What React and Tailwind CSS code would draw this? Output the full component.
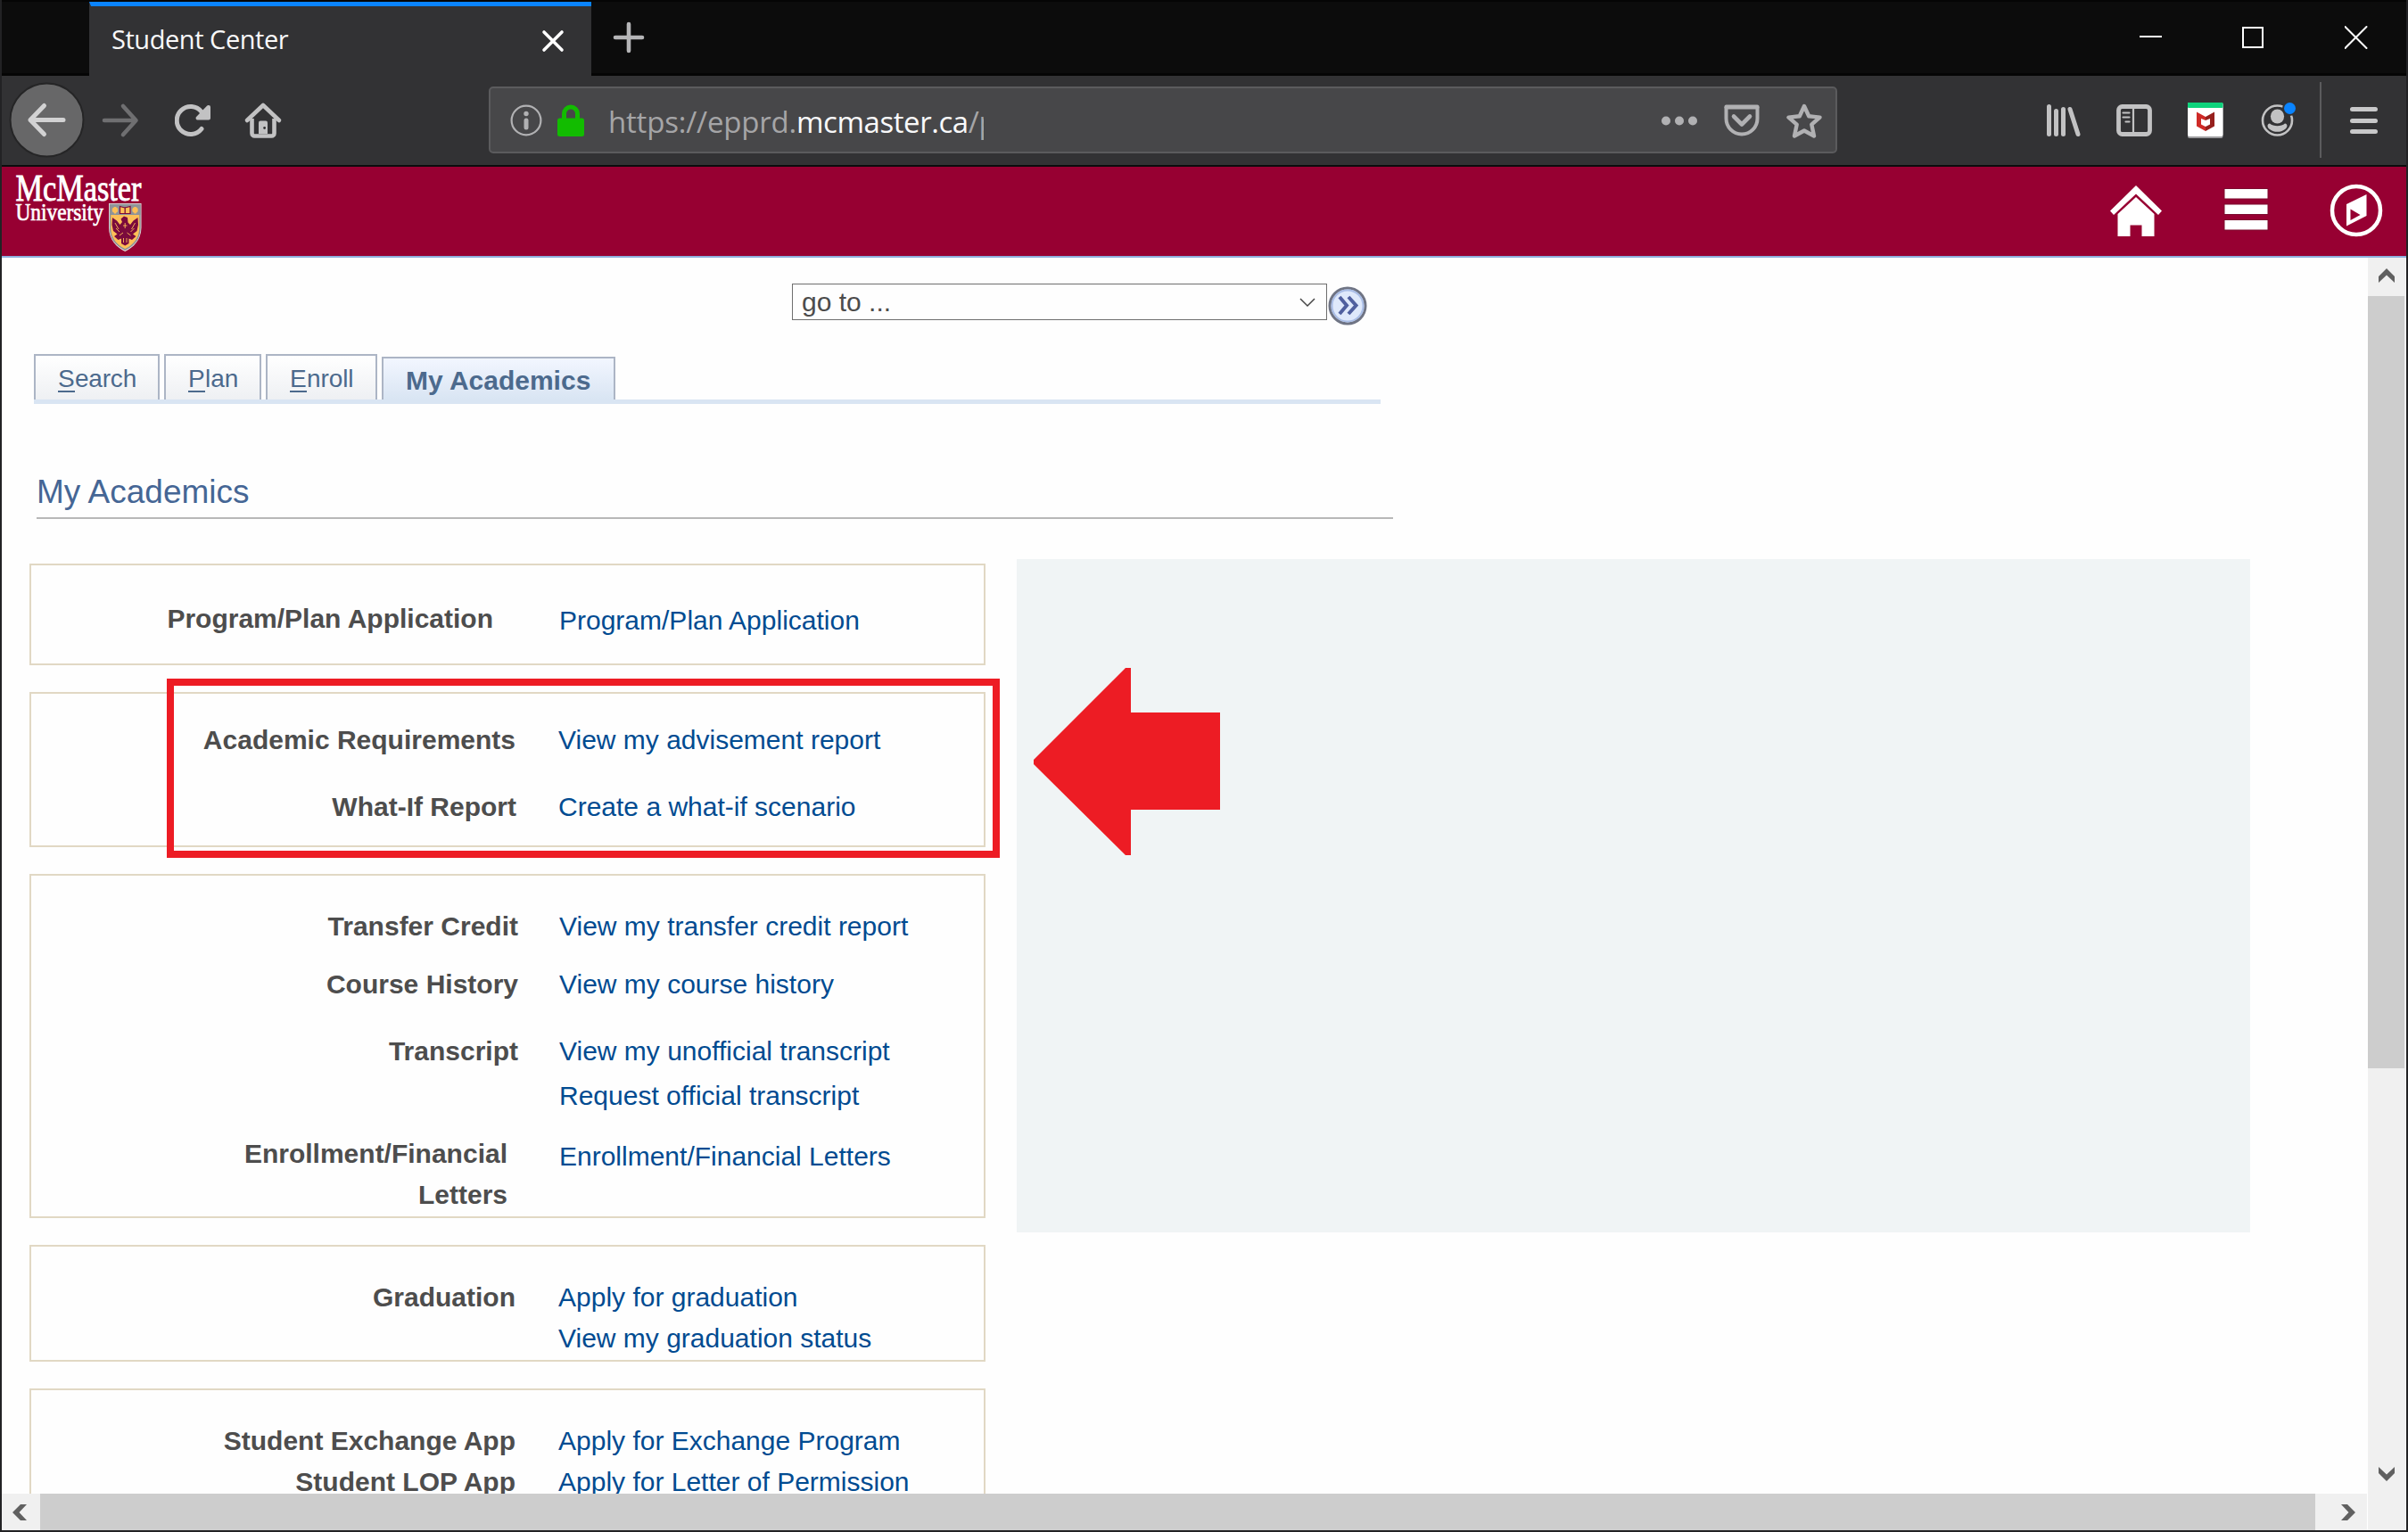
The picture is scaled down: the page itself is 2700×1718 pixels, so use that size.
import React from "react";

const groups = [
  {
    box: "h-[114px] pt-[37px]",
    rows: [{ label: ["Program/Plan Application"], links: [{ text: "Program/Plan Application", cls: "mt-[2px] ml-[1px]" }], labelCls: "pr-[27px]" }],
  },
  {
    box: "h-[174px] pt-[29px]",
    rows: [
      { label: ["Academic Requirements"], links: [{ text: "View my advisement report" }], labelCls: "pr-[2px]" },
      { label: ["What-If Report"], links: [{ text: "Create a what-if scenario" }], cls: "mt-[29px]", labelCls: "pr-px" },
    ],
  },
  {
    box: "h-[386px] pt-[34px] pl-[1px]",
    rows: [
      { label: ["Transfer Credit"], links: [{ text: "View my transfer credit report" }] },
      { label: ["Course History"], links: [{ text: "View my course history" }], cls: "mt-[19px]" },
      {
        label: ["Transcript"],
        links: [{ text: "View my unofficial transcript" }, { text: "Request official transcript", cls: "mt-[4px]" }],
        cls: "mt-[29px]",
      },
      {
        label: ["Enrollment/Financial", "Letters"],
        links: [{ text: "Enrollment/Financial Letters", cls: "mt-[3px]" }],
        cls: "mt-[19px]",
        labelCls: "pr-[12px]",
      },
    ],
  },
  {
    box: "h-[131px] pt-[34px]",
    rows: [
      {
        label: ["Graduation"],
        links: [{ text: "Apply for graduation" }, { text: "View my graduation status" }],
        labelCls: "pr-[2px]",
      },
    ],
  },
  {
    box: "h-[200px] pt-[34px]",
    rows: [
      { label: ["Student Exchange App"], links: [{ text: "Apply for Exchange Program" }], labelCls: "pr-[2px]" },
      { label: ["Student LOP App"], links: [{ text: "Apply for Letter of Permission" }], labelCls: "pr-[2px]" },
    ],
  },
];

const tabs = [
  { text: "Search", cls: "w-[141px] pl-[25px] tracking-[-0.2px]" },
  { text: "Plan", cls: "w-[109px] pl-[25px]" },
  { text: "Enroll", cls: "w-[125px] pl-[25px] tracking-[-0.1px]" },
];

function TitleBar() {
  return (
    <div className="flex h-[85px] border-t-2 border-b-[3px] border-[#050505] bg-[#0c0c0c]">
      <div className="-mb-[3px] ml-[98px] flex w-[563px] items-center justify-between border-t-[5px] border-l-2 border-t-[#0a84ff] border-l-[#323234] bg-[#323234] pr-[29px] pl-[23px]">
        <span className="-mt-[4px] text-[29px] leading-[40px] tracking-[-0.45px] text-[#f9f9fa]">Student Center</span>
        <svg className="h-[28px] w-[28px]" viewBox="0 0 28 28" fill="none" stroke="#fff" strokeWidth="3.6" strokeLinecap="round">
          <path d="M4 4 L24 24 M24 4 L4 24" />
        </svg>
      </div>
      <svg className="mt-[20px] ml-[22px] h-[40px] w-[40px]" viewBox="0 0 40 40" stroke="#b5b5b7" strokeWidth="4.6" strokeLinecap="round">
        <path d="M20 5 V35 M5 20 H35" />
      </svg>
      <div className="mt-[24px] ml-auto flex gap-[84px] pr-[37px]">
        <svg className="h-[32px] w-[32px]" viewBox="0 0 32 32">
          <rect x="2" y="14" width="25" height="2" fill="#fff" />
        </svg>
        <svg className="h-[32px] w-[32px]" viewBox="0 0 32 32">
          <rect x="2" y="5" width="22" height="22" fill="none" stroke="#fff" strokeWidth="2" />
        </svg>
        <svg className="h-[32px] w-[32px]" viewBox="0 0 32 32" stroke="#fff" strokeWidth="2" strokeLinecap="round">
          <path d="M0.500 4 L24.500 28 M24.500 4 L0.500 28" />
        </svg>
      </div>
    </div>
  );
}

function NavBar() {
  return (
    <div className="flex h-[102px] border-b-2 border-[#0c0c0d] bg-[#323234]">
      <svg className="mt-[7px] ml-[8px] h-[86px] w-[86px]" viewBox="0 0 86 86">
        <circle cx="42.5" cy="42.5" r="41" fill="#676768" stroke="#252526" strokeWidth="2" />
        <path d="M61 42.5 H24 M39.5 26.5 L24 42.5 L39.5 58.5" fill="none" stroke="#d2d2d3" strokeWidth="5" strokeLinecap="round" strokeLinejoin="round" />
      </svg>
      <svg className="mt-[30px] ml-[17px] h-[40px] w-[44px]" viewBox="0 0 44 40">
        <path d="M4 20 H39 M25 4 L39.5 20 L25 36" fill="none" stroke="#6f6f71" strokeWidth="4.6" strokeLinecap="round" strokeLinejoin="round" />
      </svg>
      <svg className="mt-[30px] ml-[39px] h-[40px] w-[42px]" viewBox="0 0 42 40">
        <path d="M30 29.5 A15.5 15.5 0 1 1 30 10.5 L34 15" fill="none" stroke="#c2c2c3" strokeWidth="5" strokeLinecap="round" />
        <path d="M38 3 a2 2 0 0 1 2 2 V17.5 a2 2 0 0 1 -2 2 H25.5 a2 2 0 0 1 -1.4 -3.4 L36 3.8 a2 2 0 0 1 2 -0.8z" fill="#c2c2c3" />
      </svg>
      <svg className="mt-[29px] ml-[35px] h-[42px] w-[44px]" viewBox="0 0 44 42">
        <path d="M4 21 L22 4 L40 21" fill="none" stroke="#c2c2c3" strokeWidth="4.6" strokeLinecap="round" strokeLinejoin="round" />
        <path d="M9.5 19 V35.5 a3 3 0 0 0 3 3 H31.5 a3 3 0 0 0 3 -3 V19" fill="none" stroke="#c2c2c3" strokeWidth="4.6" />
        <path d="M17 36 V23.5 a2 2 0 0 1 2 -2 h6 a2 2 0 0 1 2 2 V36z" fill="#c2c2c3" />
        <circle cx="23.6" cy="29.5" r="1.4" fill="#323234" />
      </svg>
      <div className="mt-[12px] ml-[231px] flex h-[75px] w-[1512px] rounded-[5px] border-2 border-[#5b5b5d] bg-[#474749]">
        <svg className="mt-[18px] ml-[20px] h-[40px] w-[40px]" viewBox="0 0 40 40">
          <circle cx="20" cy="18" r="16.4" fill="none" stroke="#b1b1b3" strokeWidth="2.2" />
          <circle cx="20" cy="10.5" r="2.7" fill="#b1b1b3" />
          <path d="M20 18 V26" stroke="#b1b1b3" strokeWidth="5" strokeLinecap="round" />
        </svg>
        <svg className="mt-[18px] ml-[13px] h-[40px] w-[34px]" viewBox="0 0 34 40">
          <path d="M9.500 17 V10.500 a7.500 7.500 0 0 1 15 0 V17" fill="none" stroke="#12bc00" strokeWidth="5" />
          <rect x="2" y="15.500" width="30" height="20.500" rx="2.500" fill="#12bc00" />
        </svg>
        <div className="mt-[11px] ml-[25px] w-[421px] overflow-hidden text-[33px] leading-[54px] tracking-[-0.2px] whitespace-nowrap text-[#a5a5a7]">
          https://epprd.<span className="tracking-[-0.45px] text-[#f9f9fa]">mcmaster.ca</span>/p
        </div>
        <svg className="mt-[16px] ml-auto h-[42px] w-[44px]" viewBox="0 0 44 42" fill="#b1b1b3">
          <circle cx="7" cy="20.500" r="5" />
          <circle cx="22" cy="20.500" r="5" />
          <circle cx="37" cy="20.500" r="5" />
        </svg>
        <svg className="mt-[16px] ml-[26px] h-[42px] w-[44px]" viewBox="0 0 44 42" fill="none" stroke="#b1b1b3" strokeLinejoin="round" strokeLinecap="round">
          <path d="M4.500 4.500 H39.500 V18 A17.500 17.500 0 0 1 4.500 18z" strokeWidth="4" />
          <path d="M4.500 5.500 H39.500" strokeWidth="4" />
          <path d="M13 15.500 L22 24.500 L31 15.500" strokeWidth="4.600" />
        </svg>
        <svg className="mt-[16px] mr-[13px] ml-[26px] h-[42px] w-[44px]" viewBox="0 0 44 42">
          <path d="M22 4 L27.200 15.200 L39.500 16.600 L30.300 24.600 L33 37.500 L22 31.500 L11 37.500 L13.700 24.600 L4.500 16.600 L16.800 15.200z" fill="none" stroke="#b1b1b3" strokeWidth="4.400" strokeLinejoin="round" />
        </svg>
      </div>
      <div className="mt-[28px] ml-[233px] flex gap-[36px]">
        <svg className="h-[44px] w-[44px]" viewBox="0 0 44 44" stroke="#c2c2c3" strokeWidth="5" strokeLinecap="round">
          <path d="M4.500 6.500 V37.500 M12.500 11.500 V37.500 M20.500 9.500 V37.500 M28 9.500 L37 37.500" />
        </svg>
        <svg className="-ml-[2px] h-[44px] w-[44px]" viewBox="0 0 44 44">
          <rect x="4.500" y="6.500" width="35" height="31" rx="4" fill="none" stroke="#c2c2c3" strokeWidth="4.800" />
          <path d="M21 6 V38" stroke="#c2c2c3" strokeWidth="2.200" />
          <path d="M9.500 13.500 H16.500 M9.500 18.500 H16.500 M12.500 23.500 H16.500" stroke="#c2c2c3" strokeWidth="2.200" strokeLinecap="round" />
        </svg>
        <svg className="h-[44px] w-[44px]" viewBox="0 0 44 44">
          <rect x="2" y="2" width="39.500" height="40" rx="2" fill="#9d9da0" />
          <rect x="2" y="2" width="39.500" height="38" rx="2" fill="#fff" />
          <rect x="2" y="2" width="39.500" height="6" rx="1" fill="#0fd37c" />
          <path d="M12 12.500 L22 18 V22 L17 20 V26.500 L22 29 V34 L12 28.500z" fill="#cf2a27" />
          <path d="M32 12.500 L22 18 V22 L27 20 V26.500 L22 29 V34 L32 28.500z" fill="#96201d" />
        </svg>
        <svg className="ml-[2px] h-[44px] w-[44px]" viewBox="0 0 44 44">
          <circle cx="20.500" cy="22" r="16.500" fill="none" stroke="#c2c2c3" strokeWidth="2.600" />
          <ellipse cx="20.500" cy="17.500" rx="7.600" ry="8" fill="#c2c2c3" />
          <path d="M12 25.500 C16 29 25 29 29 25.500 C32.500 26 32 30 29 32 C24 35.800 17 35.800 12 32 C9 30 8.500 26 12 25.500z" fill="#c2c2c3" />
          <circle cx="34.500" cy="8.500" r="8.500" fill="#323234" />
          <circle cx="34.500" cy="8.500" r="6.500" fill="#0a84ff" />
        </svg>
      </div>
      <div className="mt-[7px] ml-[24px] h-[85px] w-[2px] bg-[#5b5b5d]" />
      <div className="mt-[35px] ml-[32px] flex w-[31px] flex-col gap-[7.500px]">
        <div className="h-[5px] rounded-full bg-[#c8c8c9]" />
        <div className="h-[5px] rounded-full bg-[#c8c8c9]" />
        <div className="h-[5px] rounded-full bg-[#c8c8c9]" />
      </div>
    </div>
  );
}

function Logo() {
  return (
    <svg className="ml-[14px] h-[100px] w-[150px] overflow-visible" viewBox="16 187 150 100">
      <text x="17.500" y="224.500" fontFamily="Liberation Serif" fontSize="43" fill="#fff" stroke="#fff" strokeWidth="0.900" textLength="141" lengthAdjust="spacingAndGlyphs">McMaster</text>
      <text x="17.500" y="247" fontFamily="Liberation Serif" fontSize="27" fill="#fff" stroke="#fff" strokeWidth="0.700" textLength="98.500" lengthAdjust="spacingAndGlyphs">University</text>
      <path d="M122 228 H158.500 V255 C158.500 269 149 278 140.200 282 C131.500 278 122 269 122 255z" fill="#e9e4e0" />
      <path d="M123.500 229.500 H157 V255 C157 268 148.500 276 140.200 280 C132 276 123.500 268 123.500 255z" fill="#fdbf57" stroke="#8d9196" strokeWidth="1.500" />
      <rect x="123" y="229" width="34.500" height="12" fill="#8f9499" />
      <circle cx="129" cy="235.500" r="3.200" fill="#fdbf57" />
      <circle cx="151.500" cy="235.500" r="3.200" fill="#fdbf57" />
      <path d="M128 232 h2 v7.500 h-2z M150.500 232 h2 v7.500 h-2z" fill="#fdbf57" />
      <path d="M134.500 231.500 L140 233 L146 231.500 V239.500 H134.500z" fill="#fdbf57" stroke="#7a0a3c" strokeWidth="1.200" />
      <path d="M140.200 232.500 V239.500" stroke="#7a0a3c" strokeWidth="1.300" />
      <path d="M126 244 L131 247.500 L134.500 252 L137 249 L135.500 245.500 L139 242.500 L143 244 L143.500 249.500 L146 252 L149.500 247.500 L154.500 244 L155 252 L153.500 259 L149 262.500 L152.500 265 L148 269 L144.500 267.500 L144.500 273 L140.200 275.500 L136 273 L136 267.500 L132.500 269 L128 265 L131.500 262.500 L127 259 L125.500 252z" fill="#7a0a3c" />
      <path d="M129 250 L133 257 M151.500 250 L147.500 257 M130 256 L134 260 M150.500 256 L146.500 260 M134 264 L138 261 M146.500 264 L142.500 261 M140.200 250 V256 M138 253 H142.500 M138.500 267 V272 M142 267 V272" stroke="#fdbf57" strokeWidth="0.900" />
    </svg>
  );
}

function Banner() {
  return (
    <div className="flex h-[102px] border-b-2 border-[#8fb0dd] bg-[#970032]">
      <Logo />
      <div className="mt-[18px] ml-auto flex pr-[24px]">
        <svg className="h-[64px] w-[64px]" viewBox="0 0 64 64" fill="#fff">
          <path d="M32 3 L61 31.500 L57 36 L32 12.500 L7 36 L3 31.500z" />
          <path d="M32 16 L52.500 35 V60 H38.500 V47.500 H25.500 V60 H11.500 V35z" />
        </svg>
        <svg className="ml-[61px] h-[64px] w-[64px]" viewBox="0 0 64 64">
          <g fill="#fff" stroke="#7c0a2e" strokeWidth="1">
            <rect x="6" y="6.500" width="49" height="11.500" />
            <rect x="6" y="24" width="49" height="11.500" />
            <rect x="6" y="41.500" width="49" height="11.500" />
          </g>
        </svg>
        <svg className="ml-[58px] h-[64px] w-[64px]" viewBox="0 0 64 64">
          <circle cx="32" cy="31" r="27" fill="none" stroke="#fff" strokeWidth="4.500" />
          <path d="M43.500 13 V37 L21 48.500 V24z" fill="#fff" />
          <path d="M25.500 29.500 L36.500 36 L25.500 42z" fill="#970032" />
        </svg>
      </div>
    </div>
  );
}

function LinkGroup({ group }) {
  return (
    <div className={`w-[1072px] shrink-0 border-2 border-[#e1d8c4] ${group.box}`}>
      {group.rows.map((row) => (
        <div key={row.label[0]} className={`flex ${row.cls || ""}`}>
          <div className={`w-[545px] text-right font-bold text-[#4d4d4d] ${row.labelCls || ""}`}>
            {row.label.map((line) => (
              <div key={line}>{line}</div>
            ))}
          </div>
          <div className="ml-[46px] text-[#004b91]">
            {row.links.map((link) => (
              <div key={link.text} className={link.cls || ""}>
                {link.text}
              </div>
            ))}
          </div>
        </div>
      ))}
    </div>
  );
}

function Page() {
  return (
    <div className="relative h-[1386px] w-[2652px] overflow-hidden bg-[#fefefe] font-['Liberation_Sans',sans-serif]">
      <div className="flex h-[77px] pt-[29px] pl-[886px]">
        <div className="flex h-[41px] w-[600px] items-center justify-between border-[1.500px] border-[#6e6e6e] pr-[12px] pl-[10px] text-[30px] leading-[38px] text-[#4c4c4c]">
          <span>go to ...</span>
          <svg className="h-[14px] w-[18px]" viewBox="0 0 18 14" fill="none" stroke="#444" strokeWidth="1.500">
            <path d="M1 3 L9 11 L17 3" />
          </svg>
        </div>
        <svg className="mt-[2px] ml-[1px] h-[46px] w-[44px]" viewBox="0 0 44 46">
          <circle cx="22" cy="23" r="20" fill="#dfe9fb" stroke="#6f7484" strokeWidth="3" />
          <circle cx="22" cy="23" r="17.500" fill="none" stroke="#a9bde6" strokeWidth="2" />
          <path d="M13 13 L21 22.500 L13 32 M23 13 L31.500 22.500 L23 32" fill="none" stroke="#50609f" strokeWidth="4" />
        </svg>
      </div>

      <div className="mt-[31px] ml-[36px] flex h-[56px] w-[1510px] items-end gap-[5px] border-b-[5px] border-[#d9e5f3] text-[28px] text-[#4c6a8d]">
        {tabs.map((tab) => (
          <div key={tab.text} className={`h-[51px] border-x-2 border-t-2 border-[#acb5c5] bg-linear-to-b from-white to-[#eef0f3] leading-[52px] ${tab.cls}`}>
            <span className="inline-block h-[41px] w-[19px] border-b-2 border-[#4c6a8d] leading-[52px]">{tab.text[0]}</span>
            {tab.text.slice(1)}
          </div>
        ))}
        <div className="h-[48px] w-[262px] border-x-2 border-t-2 border-[#acb5c5] bg-linear-to-b from-[#f2f6ff] to-[#d9e5f3] pl-[25px] text-[30px] leading-[49px] font-bold">My Academics</div>
      </div>

      <div className="mt-[75px] ml-[39px] h-[54px] w-[1521px] border-b-2 border-[#b8b8b8] text-[37px] leading-[48px] text-[#456695]">My Academics</div>

      <div className="mt-[45px] flex items-start pl-[31px]">
        <div className="mt-[5px] flex flex-col gap-[30px] text-[30px] leading-[46px] whitespace-nowrap">
          {groups.map((group, i) => (
            <LinkGroup key={i} group={group} />
          ))}
        </div>
        <div className="ml-[35px] h-[755px] w-[1383px] bg-[#f0f4f5]" />
      </div>

      <div className="absolute top-[472px] left-[185px] h-[201px] w-[934px] border-8 border-[#ed1c24]" />
      <svg className="absolute top-[459px] left-[1156px] h-[212px] w-[212px]" viewBox="0 0 212 212">
        <path d="M1 104 L104 1 H110 V51 H210 V160 H110 V211 H104 L1 109z" fill="#ed1c24" />
      </svg>
    </div>
  );
}

function Chevron({ turn }) {
  return (
    <svg className={`h-[20px] w-[20px] ${turn}`} viewBox="0 0 20 20" fill="#606060">
      <path d="M1 12 L10 3 L19 12 V19 L10 10.500 L1 19z" />
    </svg>
  );
}

export default function App() {
  return (
    <div className="flex h-[1718px] w-[2700px] flex-col overflow-hidden border-r-2 border-b-2 border-l-2 border-[#222224] bg-white font-['Open_Sans','Noto_Sans',sans-serif]">
      <TitleBar />
      <NavBar />
      <Banner />
      <div className="flex flex-1">
        <div className="flex flex-col">
          <Page />
          <div className="flex h-[41px] w-[2652px] items-center bg-[#f0f0f0]">
            <div className="flex w-[43px] pl-[9px]">
              <Chevron turn="-rotate-90" />
            </div>
            <div className="h-full w-[2551px] bg-[#cdcdcd]" />
            <div className="ml-[28px]">
              <Chevron turn="rotate-90" />
            </div>
          </div>
        </div>
        <div className="ml-px flex w-[42px] flex-col items-center bg-[#f0f0f0]">
          <div className="mt-[9px] mr-px h-[34px]">
            <Chevron turn="" />
          </div>
          <div className="mr-px h-[866px] w-[41px] bg-[#cdcdcd]" />
          <div className="mt-[446px] mr-px">
            <Chevron turn="rotate-180" />
          </div>
        </div>
      </div>
    </div>
  );
}
